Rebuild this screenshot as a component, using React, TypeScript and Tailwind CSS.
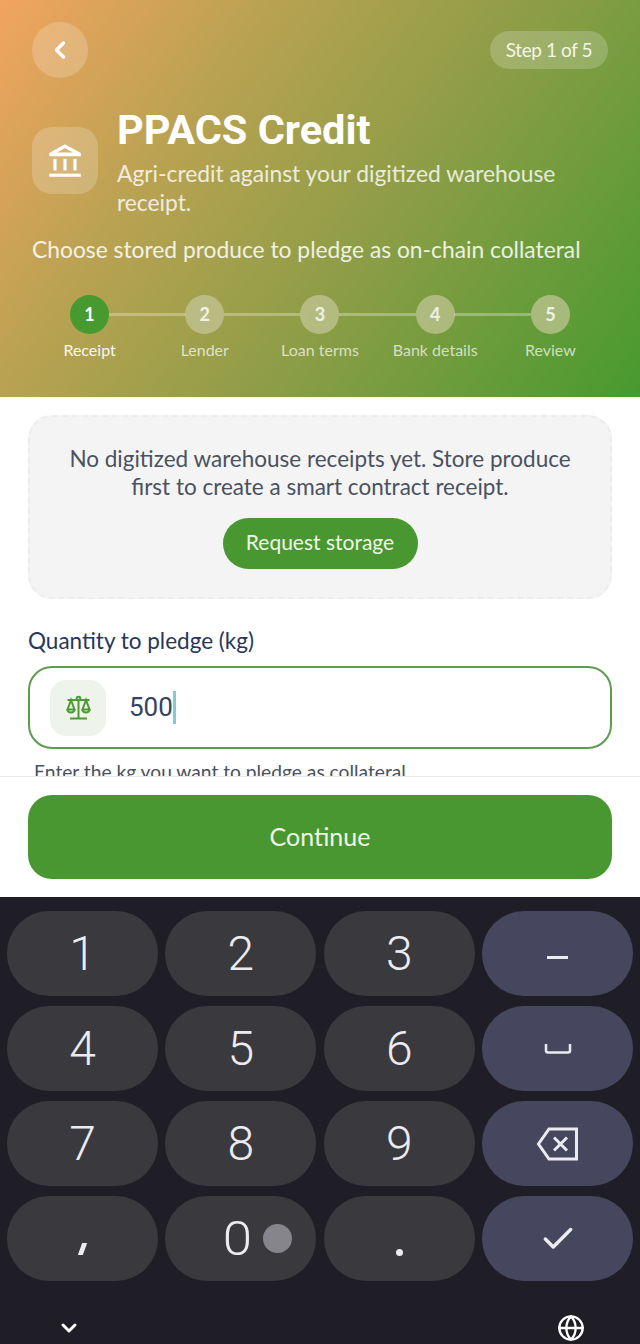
import { Check, ChevronDown, ChevronLeft, Globe } from 'lucide-react';

const steps = ['Receipt', 'Lender', 'Loan terms', 'Bank details', 'Review'];

function BankIcon() {
  return (
    <svg width="40" height="40" viewBox="0 0 38 38" fill="#fff">
      <path d="M19 3 L34 11.5 V14.5 H4 V11.5 Z M19 6.6 L11.5 11 H26.5 Z" fillRule="evenodd" />
      <rect x="8" y="17" width="3" height="11" />
      <rect x="17.5" y="17" width="3" height="11" />
      <rect x="27" y="17" width="3" height="11" />
      <rect x="4" y="31" width="30" height="3" />
    </svg>
  );
}

function ScaleIcon() {
  return (
    <svg width="27" height="26" viewBox="0 0 27 26" fill="none" stroke="#4b9a34" strokeWidth="2">
      <circle cx="13.5" cy="3.5" r="1.8" />
      <path d="M13.5 5.5 V23 M5 23.5 H22" />
      <path d="M2.5 5 H24.5" />
      <path d="M6 5 L2.5 14.5 H9.5 Z M21 5 L17.5 14.5 H24.5 Z" />
      <path d="M2.5 14.5 C3 18.5 9 18.5 9.5 14.5 M17.5 14.5 C18 18.5 24 18.5 24.5 14.5" />
    </svg>
  );
}

function Key({ label, action, children }: { label?: string; action?: boolean; children?: React.ReactNode }) {
  return (
    <div
      className={
        'flex h-[85px] items-center justify-center rounded-[42px] text-[48px] font-light text-[#ecebf0] ' +
        (action ? 'bg-[#46465e]' : 'bg-[#3a393e]')
      }
    >
      {label}
      {children}
    </div>
  );
}

export default function App() {
  return (
    <div className="flex h-[1344px] w-[640px] flex-col overflow-hidden bg-white font-['Lato',sans-serif]">
      {/* Header */}
      <header className="h-[397px] shrink-0 bg-[linear-gradient(125deg,#f2a45f_0%,#b8a252_30%,#8b9d45_60%,#479a2f_100%)] px-[32px] pt-[22px] text-white">
        <div className="flex items-center justify-between">
          <button className="flex h-[56px] w-[56px] items-center justify-center rounded-full bg-white/20">
            <ChevronLeft size={28} strokeWidth={3} />
          </button>
          <div className="flex h-[38px] w-[118px] items-center justify-center rounded-full bg-white/20 text-[19px] tracking-[-0.4px] text-[#f3f6e8]">
            Step 1 of 5
          </div>
        </div>

        <div className="mt-[26px] flex items-center gap-[19px]">
          <div className="flex h-[67px] w-[66px] shrink-0 items-center justify-center rounded-[20px] bg-white/20">
            <BankIcon />
          </div>
          <div>
            <h1 className="font-['Roboto',sans-serif] text-[41.5px] leading-[52px] font-bold">PPACS Credit</h1>
            <p className="mt-[3px] text-[22.8px] leading-[29px] text-white/80">
              Agri-credit against your digitized warehouse receipt.
            </p>
          </div>
        </div>

        <p className="mt-[16px] text-[22.8px] leading-[32px] whitespace-nowrap text-white/85">
          Choose stored produce to pledge as on-chain collateral
        </p>

        {/* Stepper */}
        <div className="mt-[30px] grid grid-cols-5">
          {steps.map((s, i) => (
            <div key={s} className="relative flex flex-col items-center">
              {i < 4 && <div className="absolute top-[18px] left-[calc(50%+19px)] h-[3px] w-[77px] bg-white/30" />}
              <div
                className={
                  'flex h-[39px] w-[39px] items-center justify-center rounded-full text-[18px] font-bold ' +
                  (i === 0 ? 'bg-[#469a30] text-white' : 'bg-[#c5c79a]/70 text-white/80')
                }
              >
                {i + 1}
              </div>
              <span className={'mt-[6px] text-[16px] leading-[20px] whitespace-nowrap ' + (i === 0 ? 'text-white/90' : 'text-white/70')}>{s}</span>
            </div>
          ))}
        </div>
      </header>

      {/* Form */}
      <main className="h-[379px] shrink-0 overflow-hidden px-[28px] pt-[18px]">
        <div className="flex h-[184px] flex-col items-center rounded-[24px] border-2 border-dashed border-[#ececee] bg-[#f4f4f5] pt-[28px]">
          <p className="px-[30px] text-center text-[22.5px] leading-[28px] text-[#4a5160]">
            No digitized warehouse receipts yet. Store produce first to create a smart contract receipt.
          </p>
          <button className="mt-[17px] h-[51px] w-[195px] rounded-full bg-[#499730] pb-[3px] text-[21px] text-[#eef6e6]">Request storage</button>
        </div>

        <label className="mt-[28px] block text-[22.5px] leading-[28px] text-[#27365a]">Quantity to pledge (kg)</label>
        <div className="mt-[11px] flex h-[83px] items-center rounded-[24px] border-2 border-[#5f9b4e] pl-[20px]">
          <div className="flex h-[56px] w-[56px] items-center justify-center rounded-[16px] bg-[#eef4ec]">
            <ScaleIcon />
          </div>
          <span className="ml-[23px] font-['Roboto',sans-serif] text-[26px] text-[#34435e]">500</span>
          <span className="h-[33px] w-[3px] bg-[#7fcfc8]" />
        </div>
        <p className="mt-[11px] pl-[6px] text-[19.2px] leading-[24px] text-[#4a5160]">Enter the kg you want to pledge as collateral</p>
      </main>

      {/* Footer */}
      <footer className="h-[121px] shrink-0 border-t border-[#e8e8e8] px-[28px] pt-[18px]">
        <button className="h-[84px] w-full rounded-[24px] bg-[#499730] text-[25px] text-[#eef6e6]">Continue</button>
      </footer>

      {/* Keyboard */}
      <section className="flex-1 bg-[#1f1e26] px-[7px] pt-[14px] font-['Roboto',sans-serif]">
        <div className="grid grid-cols-4 gap-x-[7.5px] gap-y-[10px]">
          <Key label="1" />
          <Key label="2" />
          <Key label="3" />
          <Key action>
            <span className="mt-[8px] h-[3px] w-[21px] bg-[#ecebf0]" />
          </Key>
          <Key label="4" />
          <Key label="5" />
          <Key label="6" />
          <Key action>
            <svg width="28" height="12" viewBox="0 0 28 12" fill="none" stroke="#ecebf0" strokeWidth="2.5">
              <path d="M2 1 V7.5 Q2 9.5 4 9.5 H24 Q26 9.5 26 7.5 V1" />
            </svg>
          </Key>
          <Key label="7" />
          <Key label="8" />
          <Key label="9" />
          <Key action>
            <svg width="44" height="36" viewBox="0 0 44 36" fill="none" stroke="#ecebf0" strokeWidth="3">
              <path d="M13 3 H40.5 V33 H13 L2.5 18 Z" />
              <path d="M18 11.5 L31 24.5 M31 11.5 L18 24.5" />
            </svg>
          </Key>
          <Key>
            <span className="mt-[20px] h-[12px] w-[5px] skew-x-[-20deg] bg-[#ecebf0]" />
          </Key>
          <Key>
            <span className="ml-[30px] scale-x-110">0</span>
            <span className="ml-[9px] h-[29px] w-[29px] translate-x-[4px] rounded-full bg-[#85858b]" />
          </Key>
          <Key>
            <span className="mt-[28px] h-[7px] w-[7px] rounded-full bg-[#ecebf0]" />
          </Key>
          <Key action>
            <Check size={38} strokeWidth={2.2} />
          </Key>
        </div>
        <div className="mt-[33px] flex items-center justify-between pr-[48px] pl-[50px] text-white">
          <ChevronDown size={24} strokeWidth={3} />
          <Globe size={28} strokeWidth={2} />
        </div>
      </section>
    </div>
  );
}
